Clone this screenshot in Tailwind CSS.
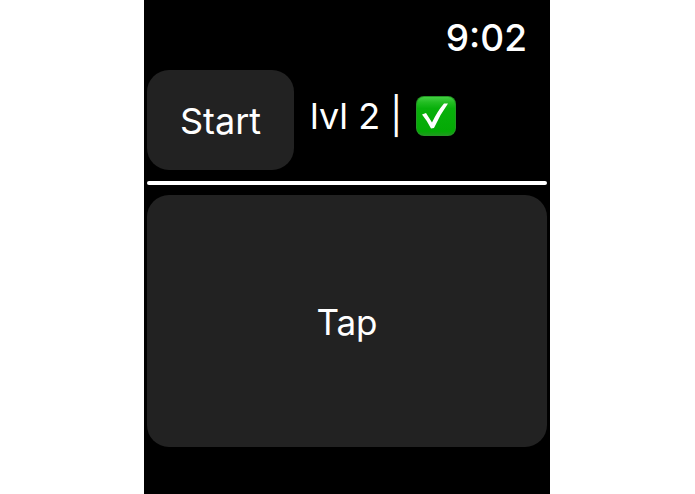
<!DOCTYPE html>
<html lang="en">
<head>
    <meta charset="UTF-8">
    <meta name="viewport" content="width=device-width, initial-scale=1.0">
    <title>Tap</title>
    <script src="https://cdn.jsdelivr.net/npm/@tailwindcss/browser@4"></script>
</head>
<body class="min-h-screen bg-white flex justify-center pr-px font-['Inter',sans-serif] text-white">
    <main class="w-full max-w-[406px] bg-black px-[3px] pb-12 flex flex-col">
        <header class="h-[70px] pt-1 pr-5 flex items-center justify-end">
            <time class="text-[37px] leading-none font-medium">9:02</time>
        </header>

        <div class="flex items-start gap-4">
            <button type="button" class="w-[147px] h-[100px] pt-0.5 rounded-[22px] bg-[#222222] text-[36px] leading-none">Start</button>
            <p class="h-[92px] flex items-center gap-3.5 text-[36px] leading-none">
                <span>lvl 2 |</span>
                <svg class="size-10" viewBox="0 0 40 40" role="img" aria-label="Passed">
                    <defs>
                        <linearGradient id="face" x1="0" y1="0" x2="0" y2="1">
                            <stop offset="0" stop-color="#43cf43"/>
                            <stop offset="0.14" stop-color="#22bd22"/>
                            <stop offset="0.3" stop-color="#08b00b"/>
                            <stop offset="0.9" stop-color="#04aa05"/>
                            <stop offset="1" stop-color="#1c9d1c"/>
                        </linearGradient>
                    </defs>
                    <rect width="40" height="40" rx="8" fill="#249724"/>
                    <rect x="1" y="1" width="38" height="38" rx="7" fill="url(#face)"/>
                    <path d="M6 18.500 L10 17 L16 26.500 Q21.500 15 28 7.500 L32 7.500 Q24 18.500 18 32 L15 32.500 Q11 24.500 6 18.500 Z" fill="#fff"/>
                </svg>
            </p>
        </div>

        <hr class="mt-[11px] mb-[10px] h-1 rounded-full border-0 bg-white">

        <button type="button" class="min-h-[252px] pt-0.5 rounded-[22px] bg-[#222222] text-[35px] leading-none">Tap</button>
    </main>
</body>
</html>
